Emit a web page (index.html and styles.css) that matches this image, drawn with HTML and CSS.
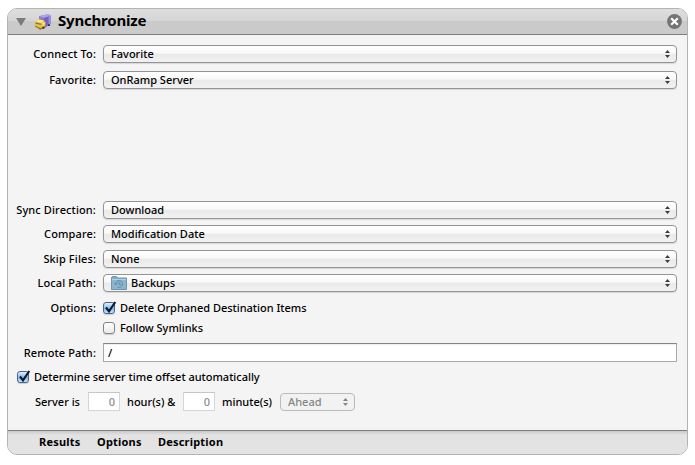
FILE: index.html
```html
<!DOCTYPE html>
<html lang="en">
<head>
<meta charset="utf-8">
<title>Synchronize</title>
<link rel="stylesheet" href="styles.css">
</head>
<body>
<svg class="defs" width="0" height="0">
  <symbol id="arrows" viewBox="0 0 5 8"><path d="M2.5 0 5 3H0zM0 5h5L2.5 8z" fill="currentColor"/></symbol>
  <symbol id="check" viewBox="0 0 14 14"><path d="M3 6.5 6 10.4 12.3 1" fill="none" stroke="#0c1730" stroke-width="2.1"/></symbol>
</svg>
<section class="panel">
  <header class="header">
    <svg class="disclosure" width="10" height="8" viewBox="0 0 10 8"><path d="M0 0h10L5 8z" fill="#7b7b7b"/></svg>
    <svg class="truck" width="18" height="18" viewBox="0 0 18 18">
      <path d="M1 13 6 17.3 17 11 16 9z" fill="#777" opacity=".5"/>
      <path d="M5 3.2 14 1.2 17 2.8V10.5L11 14.5 8 11z" fill="#7460c8"/>
      <path d="M5 3.2 14 1.2 17 2.8 9.5 5z" fill="#b0a4e8"/>
      <path d="M5 3.2 9.5 5V9.5L5 8z" fill="#8e80cf"/>
      <path d="M14.6 3.6 17 2.8V10.5L14.6 12z" fill="#9c8fe0"/>
      <path d="M1 9.2 4 6.6 9.5 7.3 11.4 9.5V14.5L6.5 16.6 1 13.2z" fill="#efc338"/>
      <path d="M1.8 8.5 4.3 6.4 9.9 7.4 7.5 9.9z" fill="#ffe777"/>
      <path d="M1.8 9.4 7.3 10.7V12L1.4 10.7z" fill="#69717c"/>
      <path d="M8.6 10.3 10.5 9V11L8.6 12.2z" fill="#f9efbc"/>
      <path d="M1 12.6 6.5 15 11.3 13V14.2L6.5 16.6 1 13.5z" fill="#93742b"/>
      <path d="M8.5 13.7h2v2h-2zM14 11.3h2v1.7h-2z" fill="#333344"/>
    </svg>
    <h1 class="title">Synchronize</h1>
    <svg class="close" width="15" height="15" viewBox="0 0 15 15"><circle cx="7.5" cy="7.5" r="7.4" fill="#747474"/><path d="m4.2 4.2 6.6 6.6m0-6.6-6.6 6.6" stroke="#fff" stroke-width="2.2"/></svg>
  </header>
  <main class="form">
    <div class="row"><span class="label">Connect To:</span><div class="select"><span>Favorite</span><svg class="arrows"><use href="#arrows"/></svg></div></div>
    <div class="row favorite"><span class="label">Favorite:</span><div class="select"><span>OnRamp Server</span><svg class="arrows"><use href="#arrows"/></svg></div></div>
    <div class="row direction"><span class="label">Sync Direction:</span><div class="select"><span>Download</span><svg class="arrows"><use href="#arrows"/></svg></div></div>
    <div class="row compare"><span class="label">Compare:</span><div class="select"><span>Modification Date</span><svg class="arrows"><use href="#arrows"/></svg></div></div>
    <div class="row skip"><span class="label">Skip Files:</span><div class="select"><span>None</span><svg class="arrows"><use href="#arrows"/></svg></div></div>
    <div class="row local"><span class="label">Local Path:</span><div class="select">
      <svg class="folder" width="16" height="14" viewBox="0 0 16 14"><path d="M.5 2Q.5.5 2 .5h3.5L7 2h8.5v11.5H.5z" fill="#87adc6" stroke="#6f96b0"/><path d="M1 4h14v9H1z" fill="#8db4cd"/><path d="M1 3.5h14" stroke="#b4d1e2"/><path d="M4.7 8.2a3.4 3.4 0 1 1 1.5 2.6M3.5 7.2l1.2 1.6 1.6-1.3M8.1 6v2.4h2" fill="none" stroke="#5d87a3" stroke-width=".9"/></svg>
      <span>Backups</span><svg class="arrows"><use href="#arrows"/></svg></div></div>
    <div class="row options"><span class="label">Options:</span><span class="box on"><svg class="tick"><use href="#check"/></svg></span><span class="caption">Delete Orphaned Destination Items</span></div>
    <div class="row symlinks"><span class="label"></span><span class="box"></span><span class="caption">Follow Symlinks</span></div>
    <div class="row remote"><span class="label">Remote Path:</span><div class="field">/</div></div>
    <div class="row offset"><span class="box on"><svg class="tick"><use href="#check"/></svg></span><span class="caption">Determine server time offset automatically</span></div>
    <div class="row server"><span class="server-is">Server is</span><div class="number">0</div><span class="hours">hour(s) &amp;</span><div class="number">0</div><span class="minutes">minute(s)</span><div class="select ahead"><span>Ahead</span><svg class="arrows"><use href="#arrows"/></svg></div></div>
  </main>
  <footer class="footer"><span class="results">Results</span><span class="opts">Options</span><span class="desc">Description</span></footer>
</section>
</body>
</html>
```
FILE: styles.css
```css
* { box-sizing: border-box; }
body { margin: 0; padding: 8px 7px 0; background: #fff; color: #000; font: 500 11px/18px "Noto Sans", "Open Sans", sans-serif; white-space: nowrap; }
svg { display: block; flex: none; }
.defs { position: absolute; }
.panel { width: 681px; height: 447px; border: 1px solid #b3b3b3; border-radius: 10px; background: #f4f4f4; overflow: hidden; display: flex; flex-direction: column; }
.header { height: 26px; flex: none; display: flex; align-items: center; padding: 0 5px 0 8px; border-bottom: 1px solid #7e7e7e; background: linear-gradient(#dedede 0, #d5d5d5 48%, #cacaca 50%, #cbcbcb 100%); }
.truck { margin-left: 8px; }
.title { margin: 0 auto 0 6px; font-size: 15px; line-height: 23px; height: 25px; letter-spacing: -.2px; }
.form { flex: 1; padding: 10px 10px 0 9px; }
.row { display: flex; height: 18px; align-items: center; }
.label { width: 79px; margin-right: 7px; display: flex; justify-content: flex-end; flex: none; letter-spacing: .12px; }
.select { flex: 1; height: 18px; display: flex; align-items: center; padding: 0 6px 0 7px; border: 1px solid #949494; border-radius: 4px; background: linear-gradient(#fff 0, #f8f8f8 45%, #eaeaea 52%, #f1f1f1 100%); box-shadow: 0 1px 1px #d8d8d8; line-height: 16px; }
.arrows { width: 5px; height: 8px; margin-left: auto; color: #3c3c3c; }
.favorite { margin-top: 8px; }
.direction { margin-top: 112px; }
.compare { margin-top: 6px; }
.skip { margin-top: 7px; }
.local { margin-top: 6px; }
.folder { margin-right: 4px; }
.options { margin-top: 7px; }
.symlinks { margin-top: 2px; }
.box { width: 12px; height: 12px; flex: none; border: 1px solid #858585; border-radius: 3px; background: linear-gradient(#fff, #e9e9e9); box-shadow: 0 1px 1px #ccc; }
.box.on { border-color: #4b638f; background: linear-gradient(#e0effc, #86b8eb 55%, #c0e8ff); }
.tick { width: 14px; height: 14px; margin: -2px 0 0 -1px; }
.caption { margin-left: 5px; letter-spacing: -.02px; }
.remote { margin-top: 6px; height: 19px; }
.field { flex: 1; height: 19px; padding-left: 4px; border: 1px solid #a9a9a9; border-top-color: #858585; background: #fff; box-shadow: inset 0 1px #eee; }
.offset { margin-top: 6px; }
.server { margin-top: 6px; height: 19px; padding-left: 18px; }
.number { width: 32px; height: 19px; border: 1px solid #d5d5d5; border-top-color: #c5c5c5; background: #fff; text-align: right; padding-right: 4px; color: #8a8a8a; flex: none; }
.server-is { width: 53px; }
.hours { width: 63px; padding-left: 7px; }
.minutes { width: 65px; padding-left: 7px; }
.ahead { flex: none; width: 75px; color: #858585; border-color: #bababa; box-shadow: none; background: #f2f2f2; }
.ahead .arrows { color: #858585; }
.footer { height: 24px; flex: none; display: flex; align-items: center; padding-left: 31px; border-top: 1px solid #7d7d7d; background: linear-gradient(#c9c9c9, #e3e3e3 4px); font-weight: 700; letter-spacing: .2px; line-height: 16px; padding-bottom: 1px; }
.results { width: 58px; }
.opts { width: 61px; }
```
